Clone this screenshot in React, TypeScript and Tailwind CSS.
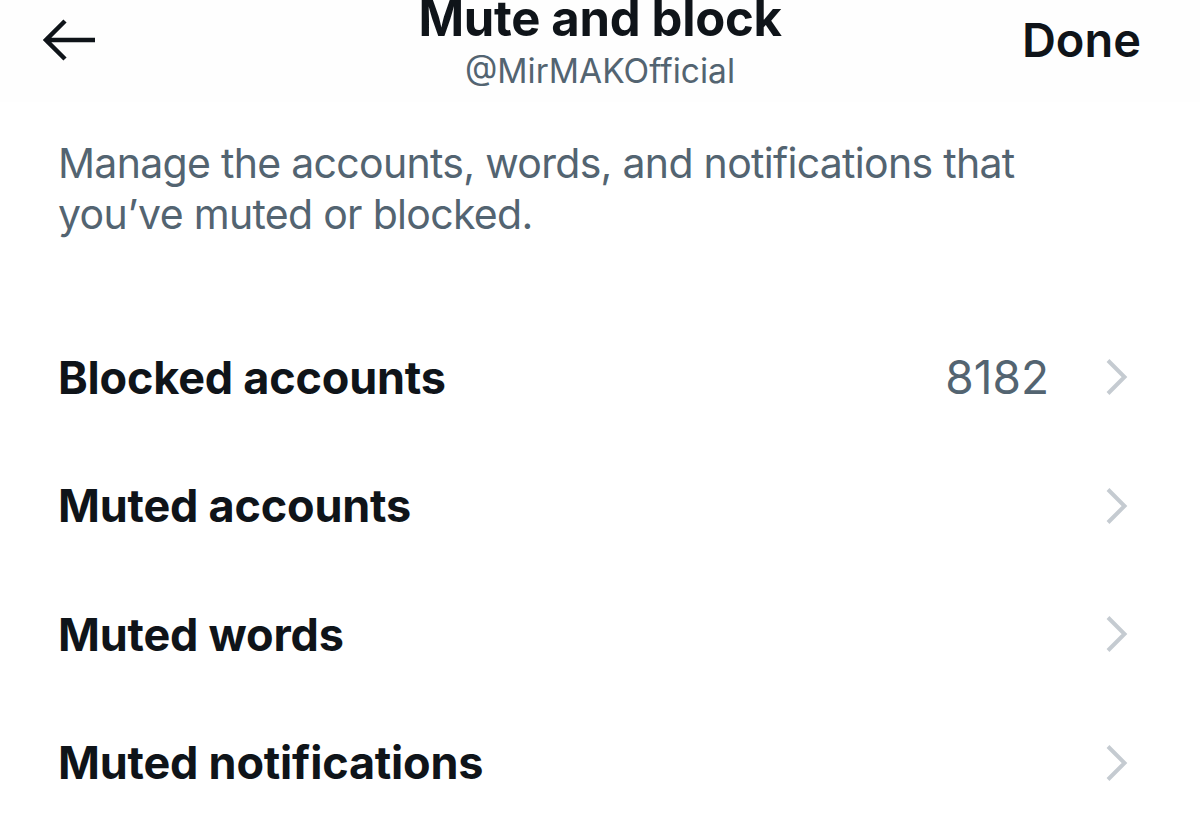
const rows = [
  { label: "Blocked accounts", value: "8182" },
  { label: "Muted accounts" },
  { label: "Muted words" },
  { label: "Muted notifications" },
];

function BackArrow() {
  return (
    <svg width="54" height="44" viewBox="0 0 54 44" fill="none">
      <path d="M52 22H5M22 3L3 22l19 19" stroke="#0f1419" strokeWidth="4.5" />
    </svg>
  );
}

function Chevron() {
  return (
    <svg width="24" height="38" viewBox="0 0 24 38" fill="none" className="shrink-0">
      <path d="M3 2.5L19.5 19 3 35.5" stroke="#c5cbd1" strokeWidth="4" />
    </svg>
  );
}

export default function App() {
  return (
    <div
      className="w-[1200px] h-[822px] overflow-hidden bg-white text-[#0f1419]"
      style={{ fontFamily: "Inter, 'Liberation Sans', sans-serif" }}
    >
      <header className="h-[102px] bg-[#fefefe] grid grid-cols-[300px_1fr_300px]">
        <div className="pl-[43px] pt-[18px]">
          <BackArrow />
        </div>
        <div className="flex flex-col items-center -mt-[10px]">
          <h1 className="text-[49px] leading-[58px] font-bold tracking-[-0.3px]">Mute and block</h1>
          <p className="text-[33.5px] leading-[40px] text-[#536471] mt-[3px]">@MirMAKOfficial</p>
        </div>
        <div className="flex justify-end pr-[59px] pt-[12px]">
          <span className="text-[47px] leading-[56px] font-semibold">Done</span>
        </div>
      </header>

      <p className="px-[58px] pt-[36px] text-[41px] leading-[51px] text-[#536471] tracking-[-0.7px]">
        Manage the accounts, words, and notifications that you’ve muted or blocked.
      </p>

      <ul className="mt-[73px]">
        {rows.map((row) => (
          <li key={row.label} className="h-[128.5px] flex items-center pl-[58px] pr-[71px]">
            <span className="flex-1 text-[45px] font-bold tracking-[-0.2px]">{row.label}</span>
            {row.value && (
              <span className="text-[46px] text-[#536471] mr-[56px]">{row.value}</span>
            )}
            <Chevron />
          </li>
        ))}
      </ul>
    </div>
  );
}
